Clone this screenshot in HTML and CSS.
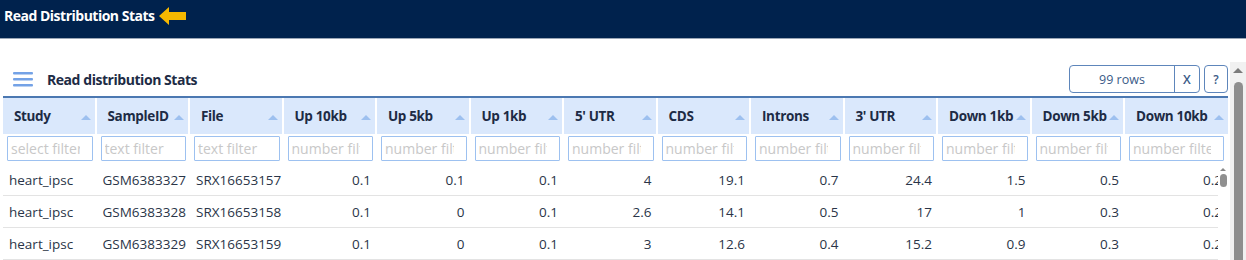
FILE: index.html
```html
<!DOCTYPE html>
<html>
<head>
<meta charset="utf-8">
<link rel="stylesheet" href="styles.css">
</head>
<body>
<header class="topbar">
  <span class="topbar-title">Read Distribution Stats</span>
  <svg class="arrow" width="28" height="18" viewBox="0 0 28 18"><polygon points="0,9 10,0 10,5 27,5 27,13 10,13 10,18" fill="#f6b800"/></svg>
</header>
<div class="body-wrap">
  <main class="main">
    <div class="panel-head">
      <div class="panel-left">
        <svg class="hamburger" width="20" height="15" viewBox="0 0 20 15"><rect x="0" y="0" width="20" height="2.6" rx="1" fill="#74a2e6"/><rect x="0" y="6" width="20" height="2.6" rx="1" fill="#74a2e6"/><rect x="0" y="12" width="20" height="2.6" rx="1" fill="#74a2e6"/></svg>
        <span class="panel-title">Read distribution Stats</span>
      </div>
      <div class="panel-right">
        <div class="rows-box"><span class="rows">99 rows</span><span class="xbtn">X</span></div>
        <div class="qbtn">?</div>
      </div>
    </div>
    <div class="table">
      <div class="thead">
        <div class="th">Study<i class="sort"></i></div>
        <div class="th">SampleID<i class="sort"></i></div>
        <div class="th">File<i class="sort"></i></div>
        <div class="th">Up 10kb<i class="sort"></i></div>
        <div class="th">Up 5kb<i class="sort"></i></div>
        <div class="th">Up 1kb<i class="sort"></i></div>
        <div class="th">5' UTR<i class="sort"></i></div>
        <div class="th">CDS<i class="sort"></i></div>
        <div class="th">Introns<i class="sort"></i></div>
        <div class="th">3' UTR<i class="sort"></i></div>
        <div class="th">Down 1kb<i class="sort"></i></div>
        <div class="th">Down 5kb<i class="sort"></i></div>
        <div class="th">Down 10kb<i class="sort"></i></div>
      </div>
      <div class="tfilter">
        <div class="tf"><input placeholder="select filter"></div>
        <div class="tf"><input placeholder="text filter"></div>
        <div class="tf"><input placeholder="text filter"></div>
        <div class="tf"><input placeholder="number filter"></div>
        <div class="tf"><input placeholder="number filter"></div>
        <div class="tf"><input placeholder="number filter"></div>
        <div class="tf"><input placeholder="number filter"></div>
        <div class="tf"><input placeholder="number filter"></div>
        <div class="tf"><input placeholder="number filter"></div>
        <div class="tf"><input placeholder="number filter"></div>
        <div class="tf"><input placeholder="number filter"></div>
        <div class="tf"><input placeholder="number filter"></div>
        <div class="tf"><input placeholder="number filter"></div>
      </div>
      <div class="tbody-wrap">
        <div class="tbody">
          <div class="tr">
            <div class="td">heart_ipsc</div><div class="td">GSM6383327</div><div class="td">SRX16653157</div>
            <div class="td num">0.1</div><div class="td num">0.1</div><div class="td num">0.1</div><div class="td num">4</div><div class="td num">19.1</div><div class="td num">0.7</div><div class="td num">24.4</div><div class="td num">1.5</div><div class="td num">0.5</div><div class="td num">0.2</div>
          </div>
          <div class="tr">
            <div class="td">heart_ipsc</div><div class="td">GSM6383328</div><div class="td">SRX16653158</div>
            <div class="td num">0.1</div><div class="td num">0</div><div class="td num">0.1</div><div class="td num">2.6</div><div class="td num">14.1</div><div class="td num">0.5</div><div class="td num">17</div><div class="td num">1</div><div class="td num">0.3</div><div class="td num">0.2</div>
          </div>
          <div class="tr">
            <div class="td">heart_ipsc</div><div class="td">GSM6383329</div><div class="td">SRX16653159</div>
            <div class="td num">0.1</div><div class="td num">0</div><div class="td num">0.1</div><div class="td num">3</div><div class="td num">12.6</div><div class="td num">0.4</div><div class="td num">15.2</div><div class="td num">0.9</div><div class="td num">0.3</div><div class="td num">0.2</div>
          </div>
        </div>
        <div class="inner-scroll"><i class="up"></i><i class="thumb"></i></div>
      </div>
    </div>
  </main>
  <aside class="page-scroll"><i class="up"></i><i class="thumb"></i></aside>
</div>
</body>
</html>
```
FILE: styles.css
```css
* { box-sizing: border-box; }
html, body { margin: 0; height: 260px; overflow: hidden; background: #fff; }
body { font-family: "Open Sans", "Noto Sans", sans-serif; color: #1d2b45; }

.topbar {
  height: 39px;
  background: #00224d;
  border-bottom: 1px solid #9aa6b6;
  display: flex;
  align-items: flex-start;
  padding: 6px 0 0 4px;
  gap: 5px;
}
.topbar-title { color: #fff; font-weight: 700; font-size: 14px; letter-spacing: -0.5px; line-height: 19px; }
.arrow { margin-top: 1px; }

.body-wrap { display: flex; margin-top: 23px; }
.main { flex: 1; min-width: 0; }
.page-scroll {
  width: 16px; height: 200px; background: #f1f1f1;
  display: flex; flex-direction: column; align-items: center; padding-top: 6px;
}
.page-scroll .up { width: 0; height: 0; border-left: 5px solid transparent; border-right: 5px solid transparent; border-bottom: 5px solid #7b7b7b; }
.page-scroll .thumb { margin-top: 9px; width: 9px; flex: 1; background: #8e8e8e; border-radius: 5px 5px 0 0; }

.panel-head { display: flex; justify-content: space-between; align-items: center; height: 34px; padding-left: 13px; padding-right: 2px; }
.panel-left { display: flex; align-items: center; gap: 14px; margin-top: 1px; }
.panel-title { font-weight: 700; font-size: 14px; letter-spacing: -0.45px; color: #1d2b45; }
.panel-right { display: flex; gap: 4px; align-items: center; }
.rows-box { display: flex; height: 28px; border: 1px solid #5e86bb; border-radius: 4px; }
.rows { width: 105px; display: flex; align-items: center; justify-content: center; font-size: 12.5px; color: #3b5b87; border-right: 1px solid #5e86bb; }
.xbtn { width: 24px; display: flex; align-items: center; justify-content: center; font-size: 12.5px; font-weight: 600; color: #3b5b87; }
.qbtn { width: 24px; height: 28px; border: 1px solid #5e86bb; border-radius: 4px; display: flex; align-items: center; justify-content: center; font-size: 12px; font-weight: 600; color: #3b5b87; }

.table { margin-left: 3px; width: 1225px; border-top: 2px solid #4b78b1; }
.thead, .tfilter, .tr { display: grid; grid-template-columns: repeat(12, 93.5px) 103px; }
.thead { background: #dae8fc; height: 36px; }
.th {
  border-right: 2px solid #fff;
  display: flex; align-items: center; justify-content: space-between;
  padding: 0 4px 0 11px;
  font-weight: 700; font-size: 13.5px; letter-spacing: -0.35px; color: #1d2b45;
}
.th:last-child { border-right: 0; }
.sort { width: 0; height: 0; border-left: 5px solid transparent; border-right: 5px solid transparent; border-bottom: 5px solid #9dc0ef; margin-top: 2px; }
.tfilter { height: 30px; }
.tf { padding: 2px 4px 0 4px; }
.tf input {
  width: 100%; height: 25px; border: 1px solid #9dc1f0; border-radius: 1px;
  font-family: inherit; font-size: 14px; padding: 0 12px 0 3px; color: #333; background: #fff; outline: none;
}
.tf input::placeholder { color: #c8c8c8; }

.tbody-wrap { display: flex; position: relative; }
.tbody { flex: 1; overflow: hidden; }
.tr { height: 32px; border-bottom: 1px solid #e3e3e3; }
.td { display: flex; align-items: center; padding: 0 6px; font-size: 13.5px; color: #2a3548; white-space: nowrap; overflow: hidden; }
.td.num { justify-content: flex-end; }
.inner-scroll {
  position: absolute; right: 0; top: 0; width: 10px; height: 100%;
  display: flex; flex-direction: column; align-items: center; padding-top: 4px; background: #fff;
}
.inner-scroll .up { width: 0; height: 0; border-left: 3px solid transparent; border-right: 3px solid transparent; border-bottom: 3px solid #8a8a8a; }
.inner-scroll .thumb { margin-top: 3px; width: 7px; height: 13px; background: #909090; border-radius: 4px; }
```
